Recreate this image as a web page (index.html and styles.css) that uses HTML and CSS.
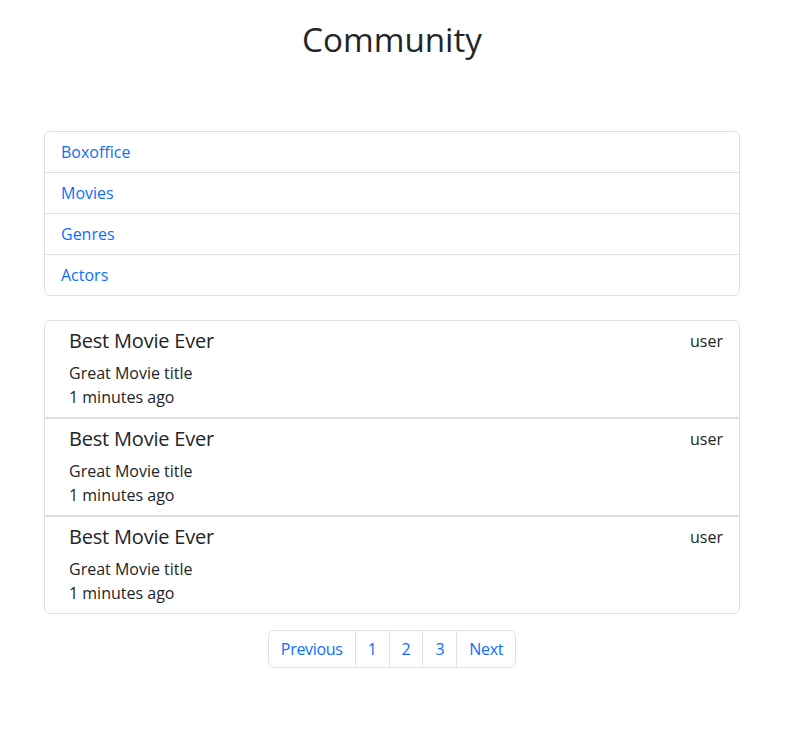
FILE: index.html
```html
<!DOCTYPE html>
<html lang="en">
<head>
<meta charset="utf-8">
<title>Community</title>
<link rel="stylesheet" href="styles.css">
</head>
<body>
<div class="container">
  <h1 class="title">Community</h1>
  <ul class="nav-list">
    <li class="nav-item"><a href="#">Boxoffice</a></li>
    <li class="nav-item"><a href="#">Movies</a></li>
    <li class="nav-item"><a href="#">Genres</a></li>
    <li class="nav-item"><a href="#">Actors</a></li>
  </ul>
  <ul class="post-list">
    <li class="post">
      <div class="post-body">
        <h5 class="post-title">Best Movie Ever</h5>
        <div>Great Movie title</div>
        <div>1 minutes ago</div>
      </div>
      <span class="post-user">user</span>
    </li>
    <li class="post">
      <div class="post-body">
        <h5 class="post-title">Best Movie Ever</h5>
        <div>Great Movie title</div>
        <div>1 minutes ago</div>
      </div>
      <span class="post-user">user</span>
    </li>
    <li class="post">
      <div class="post-body">
        <h5 class="post-title">Best Movie Ever</h5>
        <div>Great Movie title</div>
        <div>1 minutes ago</div>
      </div>
      <span class="post-user">user</span>
    </li>
  </ul>
  <ul class="pagination">
    <li><a href="#">Previous</a></li>
    <li><a href="#">1</a></li>
    <li><a href="#">2</a></li>
    <li><a href="#">3</a></li>
    <li><a href="#">Next</a></li>
  </ul>
</div>
</body>
</html>
```
FILE: styles.css
```css
* { box-sizing: border-box; }
body {
  margin: 0;
  font-family: "Open Sans", "Noto Sans CJK KR", sans-serif;
  font-size: 16px;
  line-height: 1.5;
  color: #212529;
  background: #fff;
}
a { color: #0d6efd; text-decoration: none; }
.container {
  width: 696px;
  margin-left: 44px;
}
.title {
  margin: 20px 0 70px;
  font-size: 33.2px;
  font-weight: 400;
  line-height: 40.6px;
  text-align: center;
}
.nav-list, .post-list, .pagination {
  list-style: none;
  margin: 0;
  padding: 0;
}
.nav-list {
  border: 1px solid #dfdfdf;
  border-radius: 6px;
  margin-bottom: 24px;
}
.nav-item {
  padding: 8px 16px;
}
.nav-item + .nav-item { border-top: 1px solid #dfdfdf; }
.post-list {
  border: 1px solid #dfdfdf;
  border-radius: 6px;
  margin-bottom: 16px;
}
.post {
  display: flex;
  justify-content: space-between;
  align-items: flex-start;
  padding: 8px 16px;
}
.post + .post { border-top: 2px solid #dfdfdf; }
.post-body { margin-left: 8px; }
.post-title {
  margin: 0 0 8px;
  font-size: 20px;
  font-weight: 400;
  line-height: 1.2;
  letter-spacing: -0.2px;
}
.pagination {
  display: flex;
  justify-content: center;
}
.pagination li a {
  display: block;
  padding: 6px 12px;
  border: 1px solid #dee2e6;
  margin-left: -1px;
  letter-spacing: -0.3px;
}
.pagination li:first-child a { border-radius: 6px 0 0 6px; margin-left: 0; }
.pagination li:last-child a { border-radius: 0 6px 6px 0; }
```
